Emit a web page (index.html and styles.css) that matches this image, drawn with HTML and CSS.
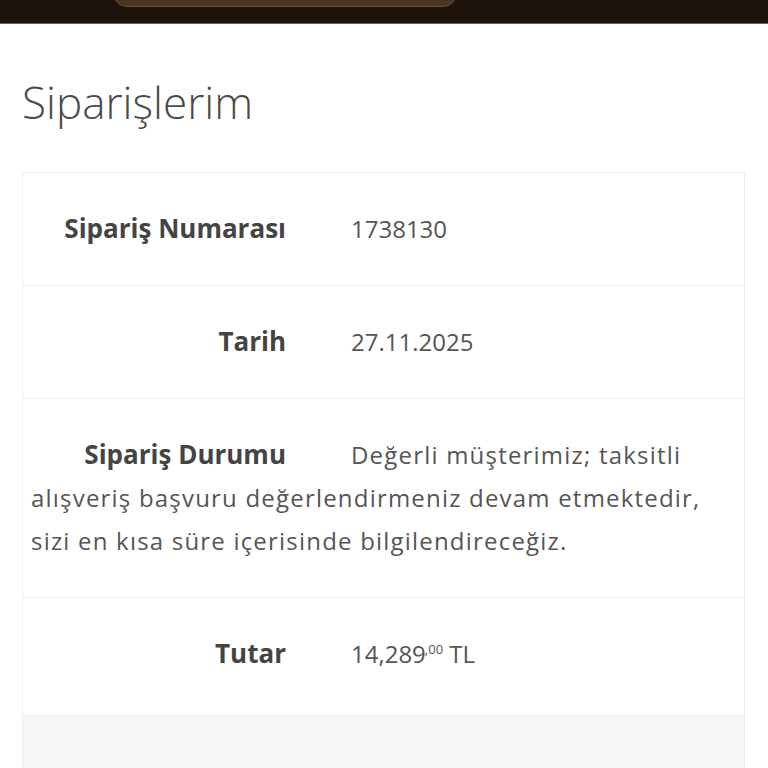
FILE: index.html
```html
<!DOCTYPE html>
<html lang="tr">

<head>
    <meta charset="UTF-8">
    <meta name="viewport" content="width=device-width, initial-scale=1.0">
    <title>Siparişlerim</title>
    <link rel="stylesheet" href="styles.css">
</head>

<body>
    <div class="topbar">
        <div class="search"></div>
    </div>

    <div class="page">
        <h1 class="title">Siparişlerim</h1>

        <div class="orders">
            <div class="order-row">
                <span class="label">Sipariş Numarası</span><span class="value">1738130</span>
            </div>
            <div class="order-row">
                <span class="label">Tarih</span><span class="value">27.11.2025</span>
            </div>
            <div class="order-row">
                <span class="label">Sipariş Durumu</span><span class="value desc">Değerli müşterimiz; taksitli alışveriş başvuru değerlendirmeniz devam etmektedir, sizi en kısa süre içerisinde bilgilendireceğiz.</span>
            </div>
            <div class="order-row total">
                <span class="label">Tutar</span><span class="value">14,289<sup class="cents">,00</sup> TL</span>
            </div>
            <div class="order-row grey"></div>
        </div>
    </div>
</body>

</html>
```

FILE: styles.css
```css
* {
    padding: 0;
    margin: 0;
    box-sizing: border-box;
}

body {
    font-family: "Open Sans", Lato, sans-serif;
    background-color: #fff;
    color: #4a4a4a;
}

.topbar {
    height: 24px;
    background-color: #1e130a;
    border-bottom: 1px solid #6b6258;
    position: relative;
    overflow: hidden;
}

.search {
    position: absolute;
    left: 113px;
    top: -40px;
    width: 344px;
    height: 47px;
    border-radius: 14px;
    background-color: #4a3520;
    border: 1px solid #6a5234;
}

.page {
    padding: 0 22px 0 22px;
    margin-right: 1px;
}

.title {
    font-weight: 300;
    font-size: 44px;
    line-height: 60px;
    color: #4a4a4a;
    padding-top: 48px;
    height: 148px;
}

.orders {
    border-left: 1px solid #f0f0f0;
    border-right: 1px solid #ececec;
    border-top: 1px solid #f2f2f2;
}

.order-row {
    padding: 34px 8px 35px 8px;
    border-bottom: 1px solid #efefef;
    font-size: 24px;
    line-height: 43px;
}

.order-row.total {
    padding-bottom: 40px;
}

.order-row.grey {
    background-color: #f7f7f7;
    height: 80px;
    border-bottom: 0;
}

.label {
    display: inline-block;
    width: 255px;
    margin-right: 65px;
    text-align: right;
    font-size: 26px;
    line-height: 43px;
    font-weight: 700;
    color: #444;
    vertical-align: top;
}

.value {
    color: #555;
}

.desc {
    letter-spacing: 1.2px;
}

.cents {
    font-size: 13px;
    vertical-align: top;
    line-height: 34px;
    margin-left: -1px;
}
```
